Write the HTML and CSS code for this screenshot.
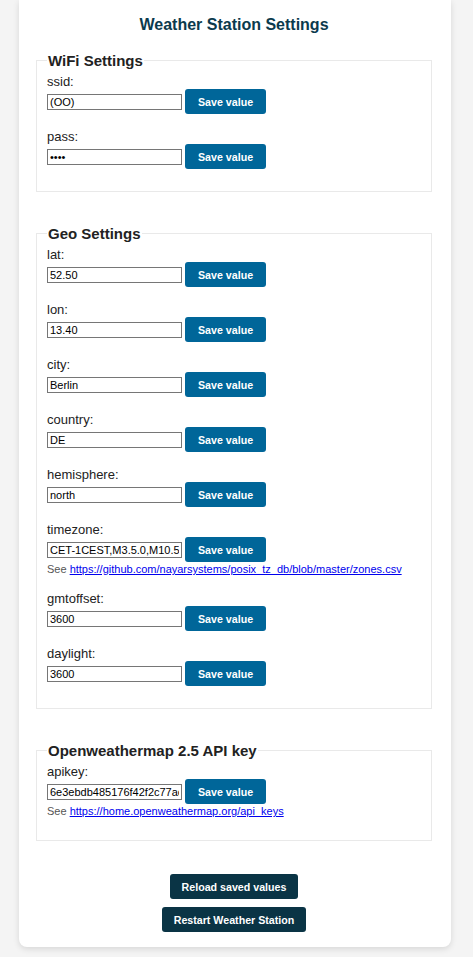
FILE: index.html
```html
<!DOCTYPE html>
<html>
<head>
<meta charset="utf-8">
<title>Weather Station Settings</title>
<link rel="stylesheet" href="styles.css">
</head>
<body>
<div class="card">
  <h1 class="title">Weather Station Settings</h1>

  <fieldset class="group">
    <legend class="group-title">WiFi Settings</legend>
    <div class="item">
      <label class="label">ssid:</label>
      <div class="row"><input class="field" type="text" value="(OO)"><button class="btn">Save value</button></div>
    </div>
    <div class="item">
      <label class="label">pass:</label>
      <div class="row"><input class="field" type="password" value="abcd"><button class="btn">Save value</button></div>
    </div>
  </fieldset>

  <fieldset class="group">
    <legend class="group-title">Geo Settings</legend>
    <div class="item">
      <label class="label">lat:</label>
      <div class="row"><input class="field" type="text" value="52.50"><button class="btn">Save value</button></div>
    </div>
    <div class="item">
      <label class="label">lon:</label>
      <div class="row"><input class="field" type="text" value="13.40"><button class="btn">Save value</button></div>
    </div>
    <div class="item">
      <label class="label">city:</label>
      <div class="row"><input class="field" type="text" value="Berlin"><button class="btn">Save value</button></div>
    </div>
    <div class="item">
      <label class="label">country:</label>
      <div class="row"><input class="field" type="text" value="DE"><button class="btn">Save value</button></div>
    </div>
    <div class="item">
      <label class="label">hemisphere:</label>
      <div class="row"><input class="field" type="text" value="north"><button class="btn">Save value</button></div>
    </div>
    <div class="item">
      <label class="label">timezone:</label>
      <div class="row"><input class="field" type="text" value="CET-1CEST,M3.5.0,M10.5.0/3"><button class="btn">Save value</button></div>
      <div class="note">See <a href="#">https://github.com/nayarsystems/posix_tz_db/blob/master/zones.csv</a></div>
    </div>
    <div class="item">
      <label class="label">gmtoffset:</label>
      <div class="row"><input class="field" type="text" value="3600"><button class="btn">Save value</button></div>
    </div>
    <div class="item">
      <label class="label">daylight:</label>
      <div class="row"><input class="field" type="text" value="3600"><button class="btn">Save value</button></div>
    </div>
  </fieldset>

  <fieldset class="group">
    <legend class="group-title">Openweathermap 2.5 API key</legend>
    <div class="item">
      <label class="label">apikey:</label>
      <div class="row"><input class="field" type="text" value="6e3ebdb485176f42f2c77ac0e1a2b3c4"><button class="btn">Save value</button></div>
      <div class="note">See <a href="#">https://home.openweathermap.org/api_keys</a></div>
    </div>
  </fieldset>

  <div class="actions">
    <button class="btn btn-dark">Reload saved values</button>
    <button class="btn btn-dark">Restart Weather Station</button>
  </div>
</div>
</body>
</html>
```

FILE: styles.css
```css
html, body {
  margin: 0;
  padding: 0;
  background: #f4f4f4;
  font-family: "Liberation Sans", Arial, sans-serif;
}

body {
  padding: 0 22px 10px 19px;
}

.card {
  background: #ffffff;
  border-radius: 0 0 8px 8px;
  box-shadow: 0 2px 6px rgba(0, 0, 0, 0.12);
  padding: 16px 19px 15px 17px;
}

.title {
  margin: 0 0 18px;
  font-size: 16px;
  line-height: 18px;
  font-weight: bold;
  text-align: center;
  color: #0b3a4d;
}

.group {
  margin: 0 0 33px;
  padding: 5px 10px 7px;
  border: 1px solid #e9e9e9;
  min-width: 0;
}

.group-title {
  padding: 0 1px;
  font-size: 15px;
  line-height: 17px;
  font-weight: bold;
  color: #222;
}

.item {
  margin-bottom: 15px;
}

.label {
  display: block;
  font-size: 13px;
  line-height: 15px;
  color: #222;
}

.row {
  display: flex;
  align-items: center;
  gap: 3px;
}

.field {
  box-sizing: border-box;
  width: 135px;
  height: 16px;
  margin: 0;
  padding: 0 2px;
  border: 1px solid #767676;
  font-family: "Liberation Sans", Arial, sans-serif;
  font-size: 11px;
  color: #000;
  background: #fff;
  outline: none;
}

.btn {
  box-sizing: border-box;
  height: 25px;
  margin: 0;
  padding: 0 13px;
  border: none;
  border-radius: 3px;
  background: #006699;
  color: #fff;
  font-family: "Liberation Sans", Arial, sans-serif;
  font-size: 10.67px;
  font-weight: bold;
  cursor: pointer;
}

.note {
  font-size: 11px;
  line-height: 14px;
  margin-bottom: 2px;
  color: #555;
}

.note a {
  color: #0000ee;
}

.actions {
  display: flex;
  flex-direction: column;
  align-items: center;
  gap: 8px;
}

.btn-dark {
  background: #0a3445;
  padding: 0 12px;
}
```
